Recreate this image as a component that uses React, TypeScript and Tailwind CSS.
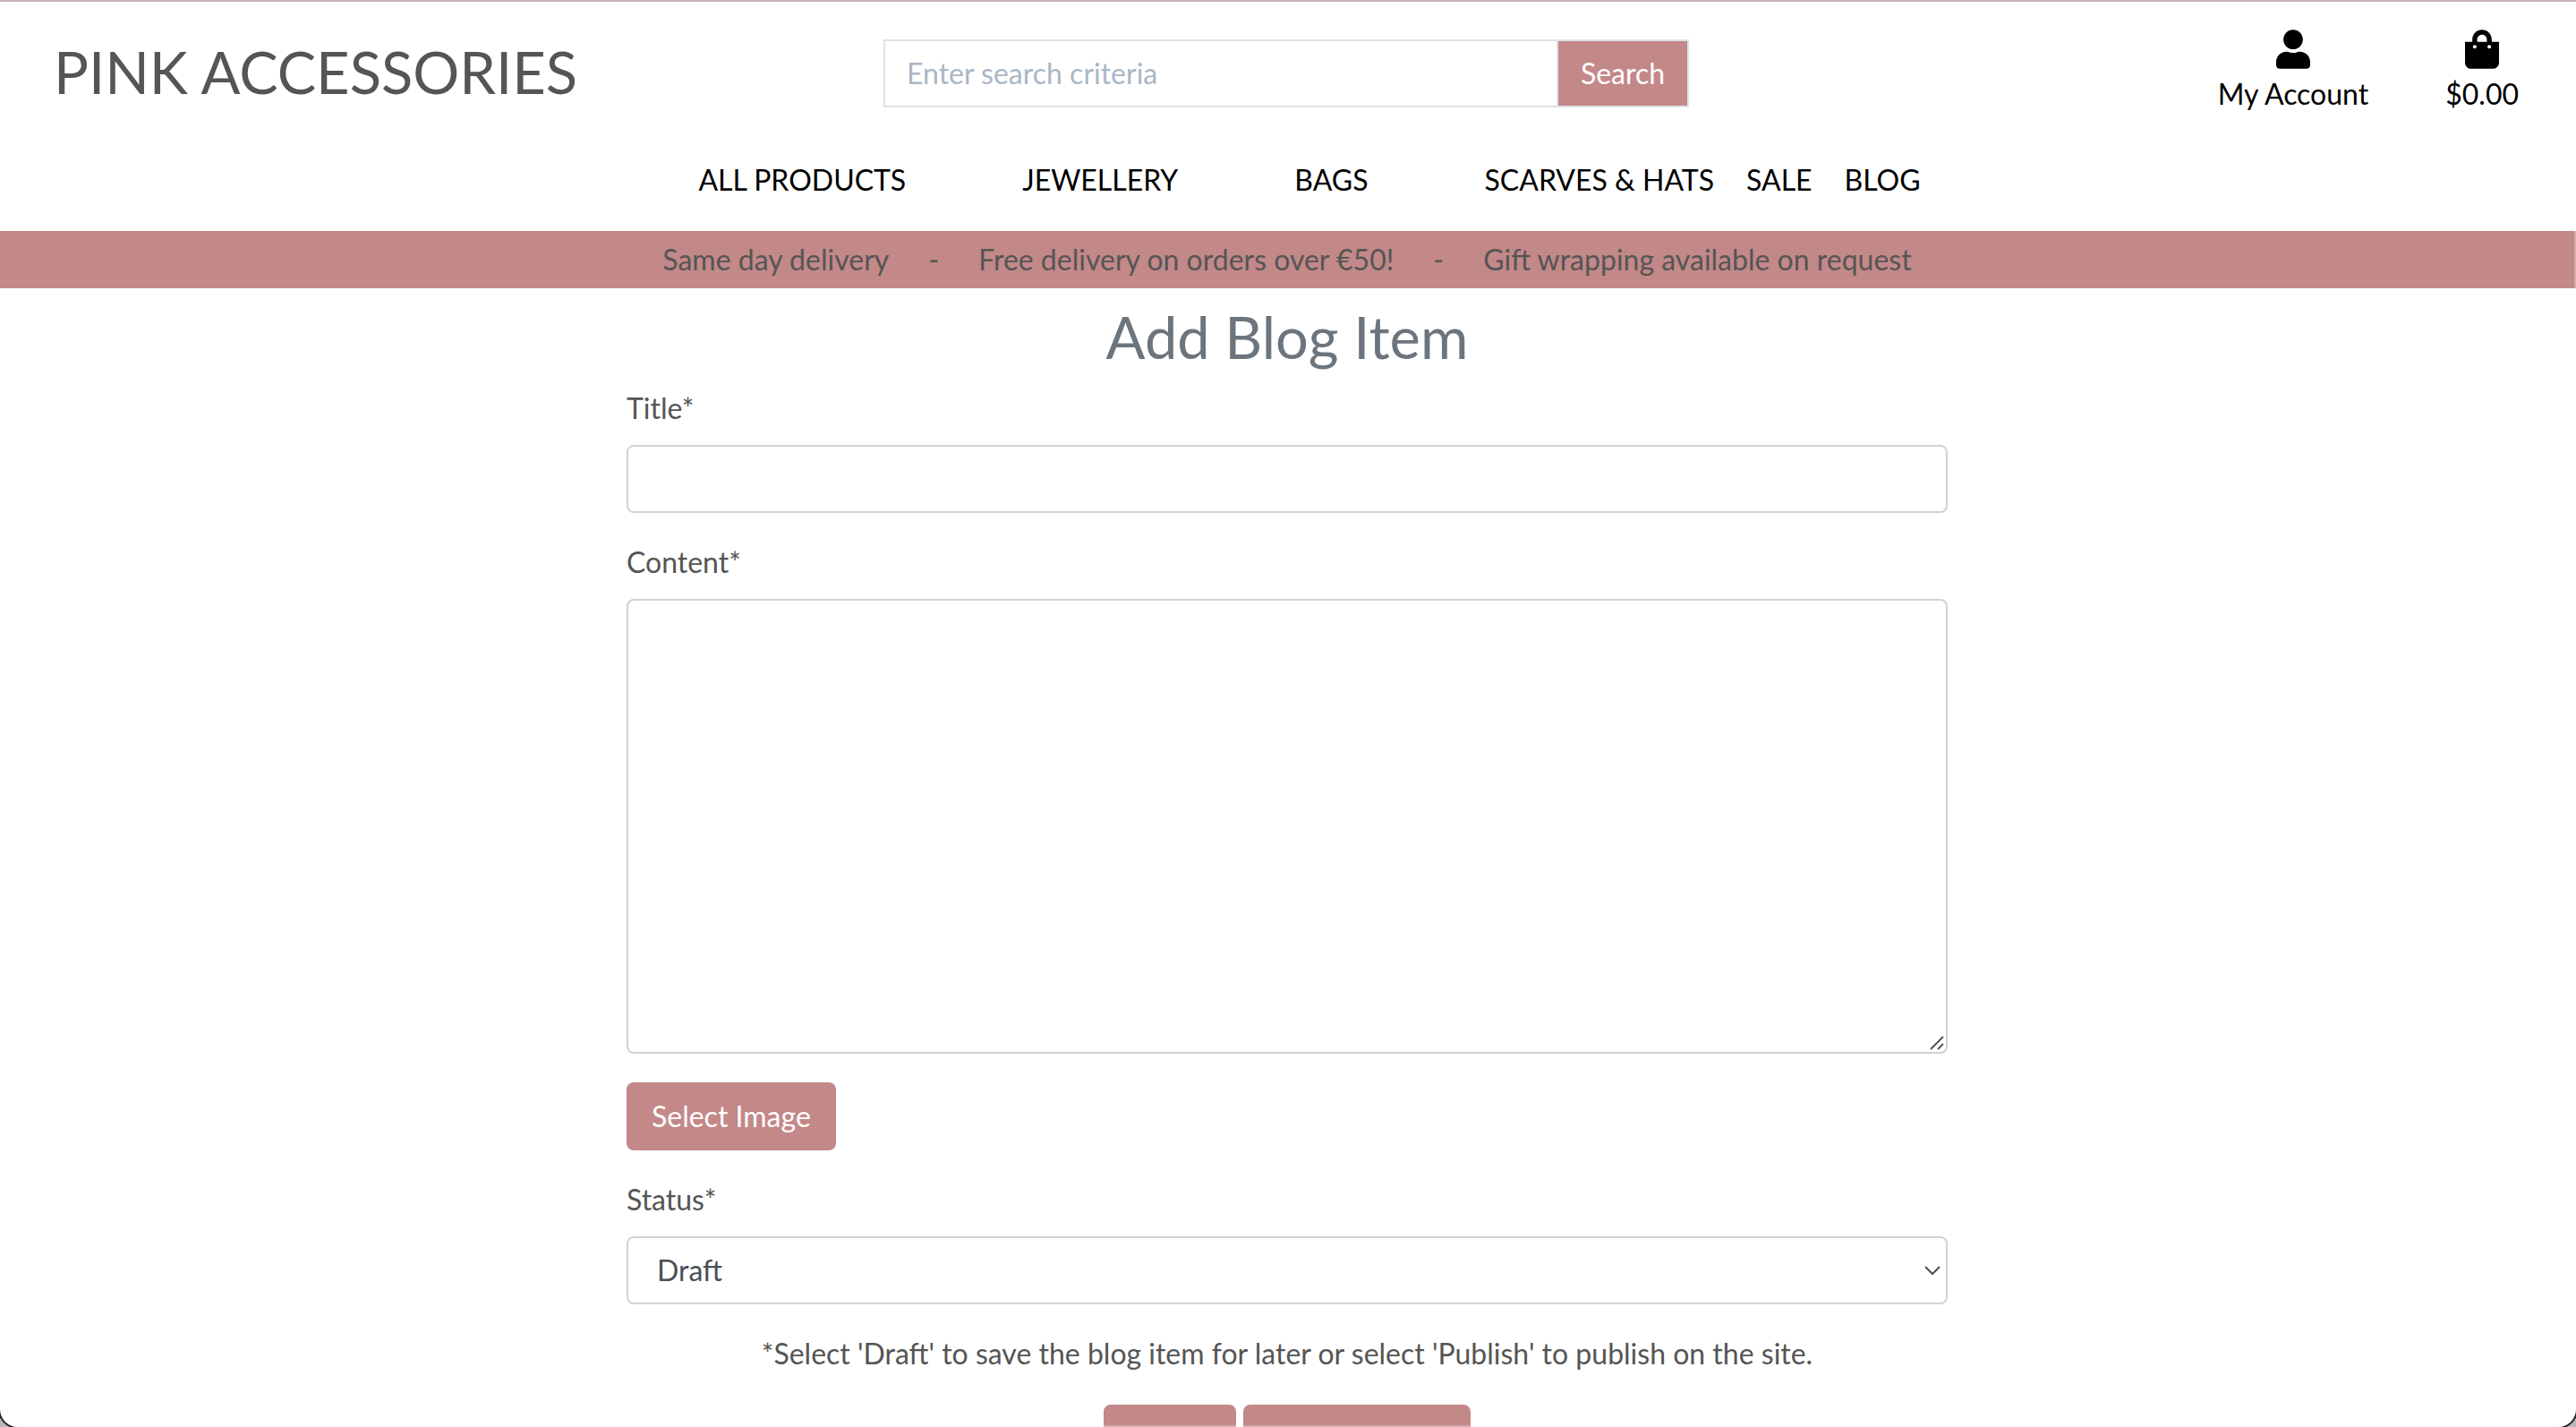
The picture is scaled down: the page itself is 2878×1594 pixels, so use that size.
import { FaShoppingBag, FaUser } from "react-icons/fa";

const NAV_MENUS = ["ALL PRODUCTS", "JEWELLERY", "BAGS"];
const NAV_LINKS = ["SCARVES & HATS", "SALE", "BLOG"];

function Header() {
  return (
    <header className="h-64">
      <div className="grid grid-cols-[1fr_minmax(0,900px)_1fr] items-start pt-[30px] pr-16 pl-[60px]">
        <a href="#home" className="text-[65px] leading-[96px] whitespace-nowrap text-[#555]">
          PINK ACCESSORIES
        </a>
        <form className="mt-3 flex h-[76px] border-2 border-[#dee2e6]" onSubmit={(e) => e.preventDefault()}>
          <input
            type="text"
            aria-label="Search"
            placeholder="Enter search criteria"
            className="min-w-0 flex-1 border-r-2 border-[#dee2e6] px-6 outline-none placeholder:text-[#aab7c4]"
          />
          <button type="submit" className="w-[144px] bg-[#c38888] text-white">
            Search
          </button>
        </form>
        <div className="flex justify-end gap-[86px] text-black">
          <a href="#account" className="flex flex-col items-center">
            <FaUser className="mt-px h-[44px] w-[38px]" />
            <span className="leading-[56px]">My Account</span>
          </a>
          <a href="#bag" className="flex flex-col items-center">
            <FaShoppingBag className="mt-px h-[44px] w-[38px]" />
            <span className="leading-[56px]">$0.00</span>
          </a>
        </div>
      </div>
      <nav className="mt-11 flex justify-center gap-[130px] pl-12 text-black">
        {NAV_MENUS.map((label) => (
          <a key={label} href="#shop">
            {label}
          </a>
        ))}
        <div className="flex gap-9">
          {NAV_LINKS.map((label) => (
            <a key={label} href="#shop">
              {label}
            </a>
          ))}
        </div>
      </nav>
    </header>
  );
}

const FIELD = "w-full rounded-[8px] border-2 border-[#ced4da] bg-white text-[#495057] outline-none";
const BUTTON = "h-[76px] rounded-[8px] bg-[#c38888] text-white";

export default function App() {
  return (
    <div className="h-screen overflow-hidden bg-[#b9bab8]">
      <div className="relative h-full overflow-hidden rounded-b-[20px] border-t-2 border-[#c9b5b9] bg-white font-['Lato',sans-serif] text-[32px] leading-[48px] text-[#555] shadow-[0_0_0_2px_#222]">
        <Header />
        <div className="flex h-16 items-center justify-center gap-11 bg-[#c38888] pr-0.5">
          <span>Same day delivery</span>
          <span>-</span>
          <span>Free delivery on orders over €50!</span>
          <span>-</span>
          <span>Gift wrapping available on request</span>
        </div>
        <main className="flex justify-center pr-0.5">
          <div className="w-full max-w-[1476px]">
            <h1 className="pt-4 text-center text-[65px] leading-[76px] text-[#6c757d]">Add Blog Item</h1>
            <form onSubmit={(e) => e.preventDefault()} className="flex flex-col pt-[18px]">
              <label htmlFor="title">Title*</label>
              <input id="title" type="text" className={`${FIELD} mt-[17px] h-[76px] px-6`} />
              <label htmlFor="content" className="mt-[31px]">
                Content*
              </label>
              <div className="relative mt-[17px] flex">
                <textarea id="content" className={`${FIELD} h-[508px] resize-none p-6`} />
                <svg
                  className="pointer-events-none absolute right-1 bottom-1 h-4 w-4"
                  viewBox="0 0 16 16"
                  fill="none"
                  stroke="#555"
                  strokeWidth="2"
                >
                  <path d="M1 15 15 1M9 15l6-6" />
                </svg>
              </div>
              <button type="button" className={`${BUTTON} mt-8 self-start px-7`}>
                Select Image
              </button>
              <label htmlFor="status" className="mt-[31px]">
                Status*
              </label>
              <div className="relative mt-[17px] flex">
                <select id="status" defaultValue="Draft" className={`${FIELD} h-[76px] appearance-none px-8`}>
                  <option>Draft</option>
                  <option>Publish</option>
                </select>
                <svg
                  className="pointer-events-none absolute right-2 bottom-8 h-3 w-[18px]"
                  viewBox="0 0 18 12"
                  fill="none"
                  stroke="#495057"
                  strokeWidth="2"
                >
                  <path d="M1 2l8 8 8-8" />
                </svg>
              </div>
              <p className="mt-[31px] mb-[33px] text-center">
                *Select 'Draft' to save the blog item for later or select 'Publish' to publish on the site.
              </p>
              <div className="flex justify-center gap-2">
                <button type="button" aria-label="Cancel" className={`${BUTTON} w-[148px]`} />
                <button type="submit" aria-label="Add Blog Item" className={`${BUTTON} w-[254px]`} />
              </div>
            </form>
          </div>
        </main>
        <div className="absolute inset-y-0 right-0 w-0.5 bg-white/30" />
        <div className="absolute inset-x-0 bottom-0 h-0.5 bg-white/30" />
      </div>
    </div>
  );
}
